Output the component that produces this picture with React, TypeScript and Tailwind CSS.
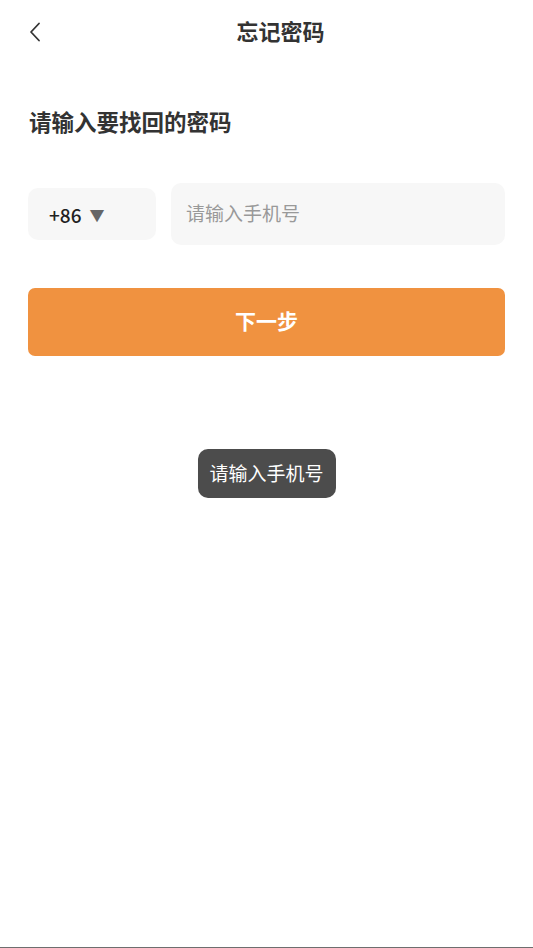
import { useState } from 'react';

const font = { fontFamily: '"Noto Sans CJK SC", "Noto Sans", sans-serif' };

export default function App() {
  const [phone, setPhone] = useState('');

  return (
    <div
      style={font}
      className="relative h-[948px] w-full bg-white border-b border-[#6e6e6e] box-border text-[#333333]"
    >
      <header className="flex h-[60px] items-center px-[28px]">
        <button type="button" className="mt-[4px] flex h-[28px] w-[28px] items-center">
          <svg width="14" height="20" viewBox="0 0 14 20" fill="none">
            <path d="M11 1.5 L3 10 L11 18.5" stroke="#333" strokeWidth="1.8" strokeLinecap="round" strokeLinejoin="round" />
          </svg>
        </button>
        <h1 className="flex-1 text-center text-[22px] font-bold leading-[30px] text-[#333333]">忘记密码</h1>
      </header>

      <div className="px-[28px]">
        <h2 className="mt-[46px] pl-[1px] text-[22.5px] font-bold leading-[30px]">请输入要找回的密码</h2>

        <div className="mt-[47px] flex items-center gap-[15px]">
          <div className="flex h-[52px] w-[128px] items-center rounded-[10px] bg-[#f7f7f7] pl-[21px]">
            <span className="text-[19px] font-medium leading-none text-[#222222]">+86</span>
            <span className="ml-[8px] text-[15px] leading-none text-[#666666]">▼</span>
          </div>
          <input
            value={phone}
            onChange={(e) => setPhone(e.target.value)}
            placeholder="请输入手机号"
            className="h-[62px] flex-1 rounded-[10px] bg-[#f7f7f7] px-[15px] pb-[3px] text-[19px] text-[#333] placeholder:text-[#999999] outline-none"
          />
        </div>

        <button
          type="button"
          className="mt-[43px] flex h-[68px] w-full items-center justify-center rounded-[7px] bg-[#f09240] pb-[3px] text-[21px] font-bold text-white"
        >
          下一步
        </button>
      </div>

      <div className="absolute left-1/2 top-[449px] flex h-[49px] -translate-x-1/2 items-center rounded-[10px] bg-[#4c4c4c] px-[12px] text-[19px] text-white whitespace-nowrap">
        请输入手机号
      </div>
    </div>
  );
}
